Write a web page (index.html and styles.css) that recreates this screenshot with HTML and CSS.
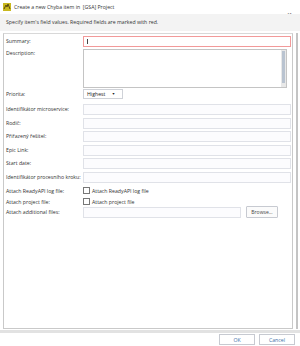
FILE: index.html
```html
<!DOCTYPE html>
<html lang="en">
<head>
  <meta charset="UTF-8" />
  <title>Create a new Chyba item</title>
  <link rel="stylesheet" href="styles.css">
</head>
<body>
  <div class="dialog">
    <div class="titlebar">
      <svg class="app-icon" width="8" height="8" viewBox="0 0 8 8">
        <rect width="8" height="8" fill="#c9b81e"/>
        <path d="M1 6 L3 2 L4 4 L5 1 L7 6" stroke="#5a4a10" stroke-width="1" fill="none"/>
      </svg>
      <span class="title">Create a new Chyba item in &nbsp;[GSA] Project</span>
      <span class="close">&#x2715;</span>
    </div>

    <div class="header">Specify item's field values. Required fields are marked with red.</div>

    <div class="content">
      <div class="panel">
        <div class="row">
          <label>Summary:</label>
          <div class="input required"><span class="caret"></span></div>
        </div>
        <div class="row desc">
          <label>Description:</label>
          <div class="textarea"><div class="vscroll"><div class="thumb"></div></div></div>
        </div>
        <div class="row prio">
          <label>Priorita:</label>
          <div class="select">Highest <span class="arrow">&#9660;</span></div>
        </div>
        <div class="row text">
          <label>Identifikátor microservice:</label>
          <div class="input"></div>
        </div>
        <div class="row text">
          <label>Rodič:</label>
          <div class="input"></div>
        </div>
        <div class="row text">
          <label>Přiřazený řešitel:</label>
          <div class="input"></div>
        </div>
        <div class="row text">
          <label>Epic Link:</label>
          <div class="input"></div>
        </div>
        <div class="row text">
          <label>Start date:</label>
          <div class="input"></div>
        </div>
        <div class="row text">
          <label>Identifikátor procesního kroku:</label>
          <div class="input"></div>
        </div>
        <div class="row check">
          <label>Attach ReadyAPI log file:</label>
          <span class="box"></span><span>Attach ReadyAPI log file</span>
        </div>
        <div class="row check">
          <label>Attach project file:</label>
          <span class="box"></span><span>Attach project file</span>
        </div>
        <div class="row file">
          <label>Attach additional files:</label>
          <div class="input short"></div>
          <button class="browse">Browse...</button>
        </div>
      </div>
      <div class="outer-scroll"></div>
    </div>

    <div class="footer">
      <button class="btn">OK</button>
      <button class="btn">Cancel</button>
    </div>
  </div>
</body>
</html>
```
FILE: styles.css
```css
body {
  margin: 0;
  font-family: "Open Sans", "Noto Sans", sans-serif;
  font-size: 5.2px;
  color: #333;
  background: #fff;
}

.dialog {
  width: 300px;
  height: 346px;
  display: flex;
  flex-direction: column;
}

.titlebar {
  height: 14px;
  display: flex;
  align-items: flex-start;
  padding-left: 3px;
}

.app-icon {
  margin-top: 3px;
}

.title {
  margin-left: 3px;
  margin-top: 3px;
  line-height: 8px;
}

.close {
  margin-left: auto;
  margin-right: 8px;
  margin-top: 11px;
  font-size: 6px;
  color: #444;
}

.header {
  height: 17px;
  background: #f3f3f3;
  line-height: 17px;
  padding-left: 6px;
}

.content {
  display: flex;
  margin-top: 2px;
  height: 296px;
}

.panel {
  margin-left: 3px;
  width: 290px;
  border: 1px solid #c9c9c9;
  border-top-color: #d8d8d8;
  padding-top: 2px;
  box-sizing: border-box;
}

.outer-scroll {
  margin-left: 3px;
  width: 2px;
  background: #c4c4c4;
}

.row {
  display: flex;
  align-items: flex-start;
  height: 13px;
}

.row label {
  width: 77px;
  padding-left: 2px;
  line-height: 11px;
  white-space: nowrap;
}

.input {
  flex: 1;
  height: 11px;
  margin-right: 1px;
  border: 1px solid #e0e2e8;
  background: #fcfcfe;
  box-sizing: border-box;
}

.input.required {
  border-color: #f29a9a;
  background: #fff;
  padding: 2px 3px;
}

.caret {
  display: block;
  width: 1px;
  height: 5px;
  background: #444;
}

.desc {
  height: 40px;
}

.desc label {
  line-height: 9px;
}

.textarea {
  flex: 1;
  height: 39px;
  margin-right: 5px;
  border: 1px solid #c4c4c4;
  display: flex;
  justify-content: flex-end;
  box-sizing: border-box;
}

.vscroll {
  width: 5px;
  background: #e8e8e8;
  padding: 1px 0;
  display: flex;
  box-sizing: border-box;
}

.thumb {
  flex: 1;
  margin: 0 1px 3px;
  background: #b9c3d0;
}

.prio {
  height: 15px;
}

.prio label {
  line-height: 10px;
}

.select {
  width: 40px;
  height: 10px;
  border: 1px solid #cfd2d8;
  box-sizing: border-box;
  line-height: 8px;
  padding-left: 3px;
  color: #222;
}

.arrow {
  font-size: 3.5px;
  margin-left: 5px;
  vertical-align: 1px;
  color: #222;
}

.text {
  height: 13.5px;
}

.check {
  height: 11px;
  align-items: center;
}

.check label {
  line-height: 10px;
}

.box {
  width: 5px;
  height: 5px;
  border: 1px solid #777;
  margin-right: 2px;
}

.file {
  height: 12px;
}

.input.short {
  flex: none;
  width: 158px;
}

.browse {
  margin-left: 4px;
  margin-top: -1px;
  width: 32px;
  height: 12px;
  padding: 0;
  font-family: inherit;
  font-size: 5px;
  color: #444;
  background: #fbfbfb;
  border: 1px solid #c7cad1;
  border-radius: 1px;
}

.footer {
  border-top: 3px solid #e2e2e2;
  margin-top: 1px;
  display: flex;
  justify-content: flex-end;
  gap: 4px;
  padding: 1px 5px 0 0;
}

.btn {
  width: 36px;
  height: 11px;
  padding: 0;
  font-family: inherit;
  font-size: 5.2px;
  color: #3d6ea8;
  background: #fff;
  border: 1px solid #c7cad1;
}
```
